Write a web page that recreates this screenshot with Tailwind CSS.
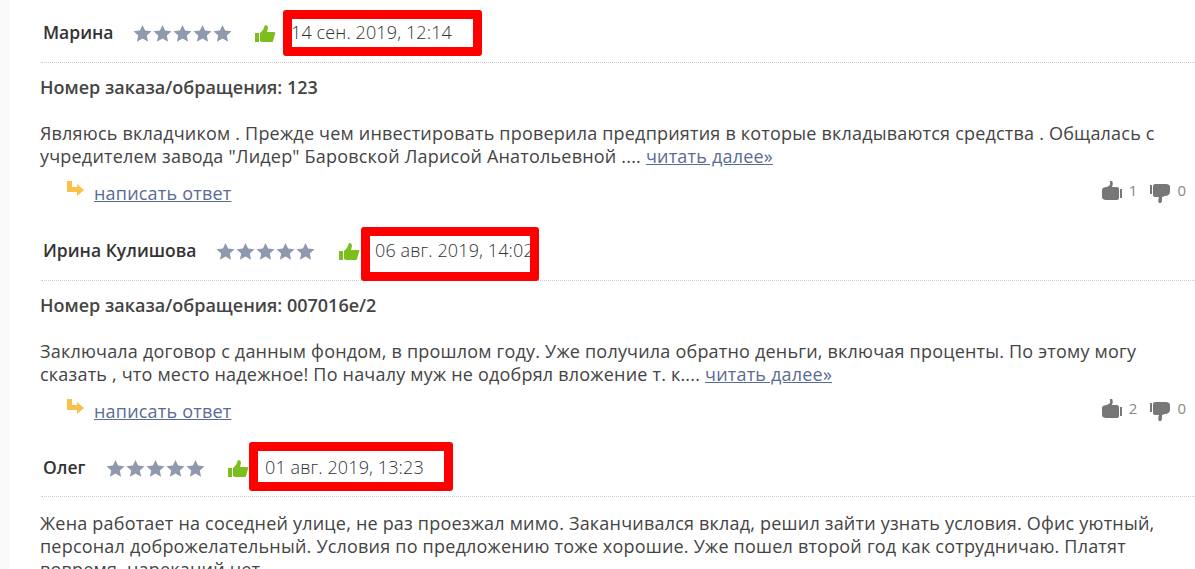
<!DOCTYPE html>
<html lang="ru">
<head>
    <meta charset="UTF-8">
    <title>Отзывы</title>
    <script src="https://cdn.jsdelivr.net/npm/@tailwindcss/browser@4"></script>
</head>
<body class="bg-white overflow-hidden font-['Open_Sans',sans-serif] text-[#444] text-[18px] tracking-[0.2px] leading-[23px]">
<svg class="hidden"><defs><path id="star" d="M9 0l2.6 5.6 6.4.7-4.7 4.2 1.3 6.2L9 13.6 3.4 16.7 4.7 10.5 0 6.3l6.4-.7z"/></defs></svg>
<div class="h-[569px] overflow-hidden border-l-[10px] border-[#fafafa] pl-[31px]">

    <!-- review 1 -->
    <div class="h-[218px]">
        <div class="flex items-center h-[63px] pt-[3px] border-b border-dotted border-[#ccc]">
            <span class="ml-[2px] w-[90px] font-semibold text-[17.5px] tracking-normal text-[#333]">Марина</span>
            <svg class="w-[100px] h-[17px] mt-[2px]" viewBox="0 0 99 17" fill="#8f99ad"><use href="#star"/><use href="#star" x="20"/><use href="#star" x="40"/><use href="#star" x="60"/><use href="#star" x="80"/></svg>
            <svg class="ml-[22px] w-[21px] h-[18px] mt-[3px]" viewBox="0 0 21 18"><path fill="#7ebd1e" d="M0 8h4v9H0zM5 8l3-3 2-5c2 0 3 1 3 3l-1 4h7c1 0 2 1 1 2l-2 7c0 1-1 1-2 1H7l-2-1z"/></svg>
            <span class="relative ml-[15px] tracking-[0.12px] font-light text-[#333]">14 сен. 2019, 12:14
                <i class="absolute left-[-8px] top-[-11px] w-[199px] h-[46px] border-[9px] border-[#f00] rounded-[3px]"></i>
            </span>
        </div>
        <p class="mt-[13px] -ml-px font-semibold tracking-normal">Номер заказа/обращения: 123</p>
        <p class="mt-[23px] -ml-px w-[1140px]">Являюсь вкладчиком . Прежде чем инвестировать проверила предприятия в которые вкладываются средства . Общалась с учредителем завода "Лидер" Баровской Ларисой Анатольевной .... <a class="underline text-[#5a6b94]">читать далее»</a></p>
        <div class="flex items-center h-[36px] mt-[6px] pr-[9px]">
            <svg class="ml-[26px] w-[17px] h-[15px] mb-[8px]" viewBox="0 0 17 15"><path fill="#f9c04a" d="M0 0h5v6h5V3l7 6-7 6v-4H0z"/></svg>
            <a class="ml-[10px] mt-[2px] underline text-[#5a6b94]">написать ответ</a>
            <div class="ml-auto flex items-center gap-[7px] -mt-[3px] text-[15px] tracking-normal text-[#888]">
                <svg class="w-[20px] h-[19px]" viewBox="0 0 20 19"><path fill="#777" d="M0 9c0-2 2-3 5-3l3-2V0h2c1 1 1 4 0 6h5c1 0 2 1 2 2v9c0 1-1 2-2 2H4c-2 0-4-1-4-3zM18 8h2v9h-2z"/></svg><span>1</span>
                <svg class="ml-[6px] mt-[6px] w-[20px] h-[19px]" viewBox="0 0 20 19"><path fill="#777" d="M0 1h2v9H0zM5 0h11c2 0 4 1 4 3v5c0 2-2 4-5 4l-3 1v4l-1 2H9c-1-1-1-4 0-6H5c-1 0-2-1-2-2V2c0-1 1-2 2-2z"/></svg><span>0</span>
            </div>
        </div>
    </div>

    <!-- review 2 -->
    <div class="h-[217px]">
        <div class="flex items-center h-[63px] pt-[3px] border-b border-dotted border-[#ccc]">
            <span class="ml-[2px] w-[173px] font-semibold text-[17.5px] tracking-normal text-[#333]">Ирина Кулишова</span>
            <svg class="w-[100px] h-[17px] mt-[2px]" viewBox="0 0 99 17" fill="#8f99ad"><use href="#star"/><use href="#star" x="20"/><use href="#star" x="40"/><use href="#star" x="60"/><use href="#star" x="80"/></svg>
            <svg class="ml-[23px] w-[21px] h-[18px] mt-[3px]" viewBox="0 0 21 18"><path fill="#7ebd1e" d="M0 8h4v9H0zM5 8l3-3 2-5c2 0 3 1 3 3l-1 4h7c1 0 2 1 1 2l-2 7c0 1-1 1-2 1H7l-2-1z"/></svg>
            <span class="relative ml-[15px] tracking-[0.12px] font-light text-[#333]">06 авг. 2019, 14:02
                <i class="absolute left-[-14px] top-[-12px] w-[178px] h-[54px] border-[9px] border-[#f00] rounded-[3px]"></i>
            </span>
        </div>
        <p class="mt-[13px] -ml-px font-semibold tracking-normal">Номер заказа/обращения: 007016е/2</p>
        <p class="mt-[23px] -ml-px w-[1140px]">Заключала договор с данным фондом, в прошлом году. Уже получила обратно деньги, включая проценты. По этому могу сказать , что место надежное! По началу муж не одобрял вложение т. к.... <a class="underline text-[#5a6b94]">читать далее»</a></p>
        <div class="flex items-center h-[36px] mt-[6px] pr-[9px]">
            <svg class="ml-[26px] w-[17px] h-[15px] mb-[8px]" viewBox="0 0 17 15"><path fill="#f9c04a" d="M0 0h5v6h5V3l7 6-7 6v-4H0z"/></svg>
            <a class="ml-[10px] mt-[2px] underline text-[#5a6b94]">написать ответ</a>
            <div class="ml-auto flex items-center gap-[7px] -mt-[3px] text-[15px] tracking-normal text-[#888]">
                <svg class="w-[20px] h-[19px]" viewBox="0 0 20 19"><path fill="#777" d="M0 9c0-2 2-3 5-3l3-2V0h2c1 1 1 4 0 6h5c1 0 2 1 2 2v9c0 1-1 2-2 2H4c-2 0-4-1-4-3zM18 8h2v9h-2z"/></svg><span>2</span>
                <svg class="ml-[6px] mt-[6px] w-[20px] h-[19px]" viewBox="0 0 20 19"><path fill="#777" d="M0 1h2v9H0zM5 0h11c2 0 4 1 4 3v5c0 2-2 4-5 4l-3 1v4l-1 2H9c-1-1-1-4 0-6H5c-1 0-2-1-2-2V2c0-1 1-2 2-2z"/></svg><span>0</span>
            </div>
        </div>
    </div>

    <!-- review 3 -->
    <div>
        <div class="flex items-center h-[62px] pt-[3px] border-b border-dotted border-[#ccc]">
            <span class="ml-[2px] w-[63px] font-semibold text-[17.5px] tracking-normal text-[#333]">Олег</span>
            <svg class="w-[100px] h-[17px] mt-[2px]" viewBox="0 0 99 17" fill="#8f99ad"><use href="#star"/><use href="#star" x="20"/><use href="#star" x="40"/><use href="#star" x="60"/><use href="#star" x="80"/></svg>
            <svg class="ml-[22px] w-[21px] h-[18px] mt-[3px]" viewBox="0 0 21 18"><path fill="#7ebd1e" d="M0 8h4v9H0zM5 8l3-3 2-5c2 0 3 1 3 3l-1 4h7c1 0 2 1 1 2l-2 7c0 1-1 1-2 1H7l-2-1z"/></svg>
            <span class="relative ml-[16px] tracking-[0.12px] font-light text-[#333]">01 авг. 2019, 13:23
                <i class="absolute left-[-16px] top-[-14px] w-[204px] h-[49px] border-[9px] border-[#f00] rounded-[3px]"></i>
            </span>
        </div>
        <p class="mt-[15px] -ml-px w-[1140px]">Жена работает на соседней улице, не раз проезжал мимо. Заканчивался вклад, решил зайти узнать условия. Офис уютный, персонал доброжелательный. Условия по предложению тоже хорошие. Уже пошел второй год как сотрудничаю. Платят вовремя, нареканий нет.</p>
    </div>

</div>
</body>
</html>
